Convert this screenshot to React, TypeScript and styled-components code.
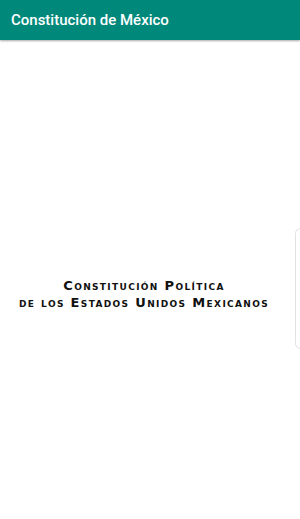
import React from "react";
import styled, { createGlobalStyle } from "styled-components";

const GlobalStyle = createGlobalStyle`
  html, body, #root {
    margin: 0;
    padding: 0;
    height: 100%;
    background: #ffffff;
  }
`;

const Screen = styled.div`
  position: relative;
  display: flex;
  flex-direction: column;
  width: 300px;
  height: 519px;
  overflow: hidden;
  background: #ffffff;
`;

const AppBar = styled.header`
  display: flex;
  align-items: center;
  height: 40px;
  padding: 0 11px;
  background: #00897b;
  box-shadow: 0 1px 2px rgba(0, 0, 0, 0.35);
  z-index: 1;
`;

const Title = styled.h1`
  margin: 0;
  font-family: Roboto, "Noto Sans", sans-serif;
  font-weight: 500;
  font-size: 15px;
  color: #ffffff;
`;

const Body = styled.main`
  flex: 1;
  display: flex;
  align-items: center;
  justify-content: center;
  padding: 28px 12px 0 0;
`;

const Heading = styled.div`
  font-family: "DejaVu Sans", Verdana, sans-serif;
  font-weight: bold;
  font-variant: small-caps;
  font-size: 13px;
  line-height: 17px;
  letter-spacing: 1.35px;
  text-align: center;
  color: #111111;
`;

const DrawerHandle = styled.div`
  position: absolute;
  right: -6px;
  top: 228px;
  width: 9px;
  height: 119px;
  border: 1px solid #e2e2e2;
  border-radius: 6px;
  background: #ffffff;
`;

export default function App() {
  return (
    <>
      <GlobalStyle />
      <Screen>
        <AppBar>
          <Title>Constitución de México</Title>
        </AppBar>
        <Body>
          <Heading>
            Constitución Política
            <br />
            de los Estados Unidos Mexicanos
          </Heading>
        </Body>
        <DrawerHandle />
      </Screen>
    </>
  );
}
